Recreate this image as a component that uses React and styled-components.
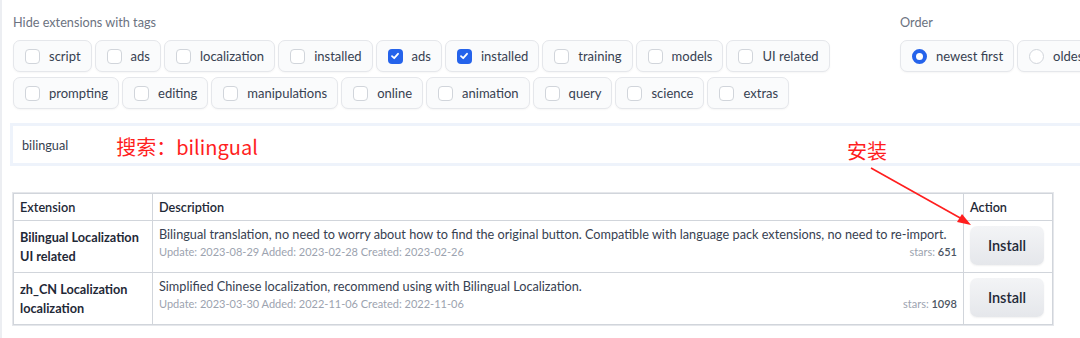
import React from 'react';
import styled, { createGlobalStyle } from 'styled-components';

const Global = createGlobalStyle`
  body {
    margin: 0;
    background: #fff;
    font-family: Lato, "Noto Sans", sans-serif;
    color: #374151;
  }
`;

const Page = styled.div`
  position: relative;
  width: 1080px;
  height: 338px;
  overflow: hidden;
  border-left: 2px solid #eceef2;
  box-sizing: border-box;
`;

const Top = styled.div`
  display: flex;
  padding: 14px 0 0 11px;
`;

const Group = styled.div`
  width: ${p => p.w || 'auto'};
  flex-shrink: 0;
`;

const Label = styled.div`
  font-size: 12.7px;
  color: #6b7280;
  height: 18px;
  margin-bottom: 8px;
`;

const Chips = styled.div`
  display: flex;
  flex-wrap: ${p => (p.nowrap ? 'nowrap' : 'wrap')};
  gap: 5px 3px;
  width: ${p => p.w || 'auto'};
`;

const Chip = styled.label`
  display: flex;
  align-items: center;
  height: 32px;
  box-sizing: border-box;
  padding: 0 10px 0 11px;
  border: 1px solid #e5e7eb;
  border-radius: 7px;
  background: #fafbfc;
  box-shadow: 0 1px 2px rgba(0, 0, 0, 0.04);
  font-size: 13px;
  color: #374151;
  white-space: nowrap;
`;

const Box = styled.span`
  width: 15px;
  height: 15px;
  box-sizing: border-box;
  border-radius: ${p => (p.round ? '50%' : '4px')};
  border: ${p => (p.on ? (p.round ? '4px solid #2563eb' : 'none') : '1px solid #d1d5db')};
  background: ${p => (p.on && !p.round ? '#2563eb' : '#fff')};
  margin-right: 9px;
  display: flex;
  align-items: center;
  justify-content: center;
  flex-shrink: 0;
`;

const Search = styled.div`
  margin: 14px 0 0 8px;
  height: 43px;
  box-sizing: border-box;
  border: 3px solid #eef3fb;
  border-right: none;
  display: flex;
  align-items: center;
  padding-left: 9px;
  font-size: 12.7px;
  color: #374151;
`;

const Note = styled.span`
  color: #ff1e1e;
  font-family: "Noto Sans CJK SC", "Noto Sans", sans-serif;
  font-size: 20px;
  margin-left: ${p => p.ml || 0}px;
  padding-top: 3px;
`;

const FloatNote = styled(Note)`
  position: absolute;
  left: 845px;
  top: 133px;
`;

const Table = styled.table`
  margin: 27px 0 0 11px;
  width: 1040px;
  border-collapse: collapse;
  font-size: 12.7px;
  outline: 1px solid #e5e7eb;
  td, th {
    border: 1px solid #d1d5db;
    padding: 0 6px;
    text-align: left;
    vertical-align: middle;
  }
  th {
    height: 26px;
    font-weight: 600;
    color: #1f2937;
  }
`;

const NameCell = styled.td`
  width: 126px;
  font-weight: 700;
  color: #1f2937;
  line-height: 19px;
  height: 51px;
`;

const DescCell = styled.td`
  line-height: 18px;
  color: #374151;
  white-space: nowrap;
  && {
    vertical-align: top;
    padding-top: 4px;
  }
`;

const Meta = styled.div`
  display: flex;
  justify-content: space-between;
  font-size: 11px;
  color: #9ca3af;
  b {
    color: #4b5563;
    font-weight: 600;
  }
`;

const ActionCell = styled.td`
  width: 76px;
`;

const Button = styled.button`
  width: 74px;
  height: 39px;
  margin-top: -2px;
  border: none;
  border-radius: 7px;
  background: linear-gradient(#f3f4f6, #e5e7eb);
  font-family: inherit;
  font-size: 14.5px;
  font-weight: 600;
  color: #1f2937;
  box-shadow: 0 1px 2px rgba(0, 0, 0, 0.06);
`;

const Arrow = styled.svg`
  position: absolute;
  left: 860px;
  top: 160px;
`;

const tags1 = [
  ['script'], ['ads'], ['localization'], ['installed'], ['ads', true], ['installed', true],
  ['training'], ['models'], ['UI related'], ['prompting'], ['editing'], ['manipulations'],
  ['online'], ['animation'], ['query'], ['science'], ['extras'],
];

const rows = [
  {
    name: 'Bilingual Localization',
    tag: 'UI related',
    desc: 'Bilingual translation, no need to worry about how to find the original button. Compatible with language pack extensions, no need to re-import.',
    meta: 'Update: 2023-08-29 Added: 2023-02-28 Created: 2023-02-26',
    stars: 651,
  },
  {
    name: 'zh_CN Localization',
    tag: 'localization',
    desc: 'Simplified Chinese localization, recommend using with Bilingual Localization.',
    meta: 'Update: 2023-03-30 Added: 2022-11-06 Created: 2022-11-06',
    stars: 1098,
  },
];

const Check = () => (
  <svg width="10" height="10" viewBox="0 0 10 10">
    <path d="M2 5.2 L4.2 7.2 L8 2.8" stroke="#fff" strokeWidth="1.8" fill="none" strokeLinecap="round" strokeLinejoin="round" />
  </svg>
);

export default function App() {
  return (
    <Page>
      <Global />
      <Top>
        <Group w="887px">
          <Label>Hide extensions with tags</Label>
          <Chips w="840px">
            {tags1.map(([t, on], i) => (
              <Chip key={i}>
                <Box on={on}>{on && <Check />}</Box>
                {t}
              </Chip>
            ))}
          </Chips>
        </Group>
        <Group>
          <Label>Order</Label>
          <Chips nowrap>
            <Chip><Box on round />newest first</Chip>
            <Chip><Box round />oldest first</Chip>
          </Chips>
        </Group>
      </Top>
      <Search>
        bilingual
        <Note ml={48}>搜索：bilingual</Note>
      </Search>
      <FloatNote>安装</FloatNote>
      <Table>
        <thead>
          <tr>
            <th>Extension</th>
            <th>Description</th>
            <th>Action</th>
          </tr>
        </thead>
        <tbody>
          {rows.map(r => (
            <tr key={r.name}>
              <NameCell>{r.name}<br />{r.tag}</NameCell>
              <DescCell>
                {r.desc}
                <Meta>
                  <span>{r.meta}</span>
                  <span>stars: <b>{r.stars}</b></span>
                </Meta>
              </DescCell>
              <ActionCell><Button>Install</Button></ActionCell>
            </tr>
          ))}
        </tbody>
      </Table>
      <Arrow width="120" height="80" viewBox="0 0 120 80">
        <line x1="9" y1="8" x2="100" y2="59" stroke="#ff1e1e" strokeWidth="1.6" />
        <polygon points="109,65 95,62 100,54" fill="#ff1e1e" />
      </Arrow>
    </Page>
  );
}
